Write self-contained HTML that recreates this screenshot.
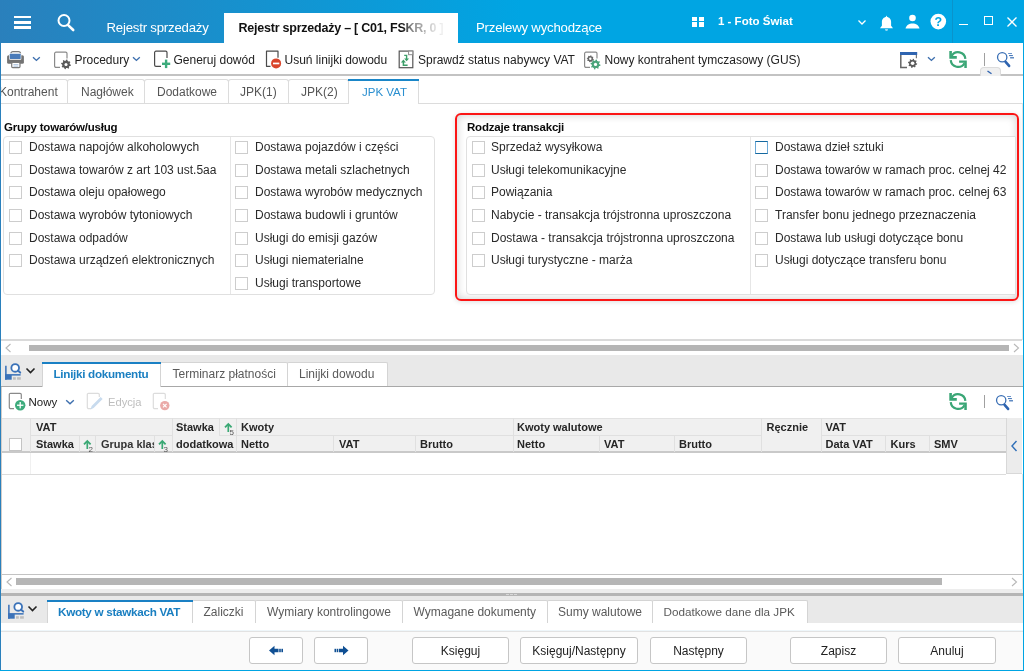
<!DOCTYPE html>
<html><head><meta charset="utf-8">
<style>
*{box-sizing:border-box;margin:0;padding:0}
html,body{width:1024px;height:671px;overflow:hidden;background:#fff}
body{position:relative;font-family:"Liberation Sans",sans-serif;font-size:12px;color:#222}
.a{position:absolute}
.t{position:absolute;white-space:nowrap;line-height:14px}
.cb{position:absolute;width:13px;height:13px;border:1px solid #cdcdcd;background:#fff}
</style></head><body>
<div id="root" style="position:absolute;left:0;top:0;width:1024px;height:671px;will-change:transform">

<div class="a" style="left:0px;top:0px;width:1024px;height:43px;background:linear-gradient(to right,#2a80bc 0px,#00a5e3 522px,#00a5e3 1024px)"></div>
<div class="a" style="left:14px;top:16.2px;width:17px;height:2.3px;background:#fff"></div>
<div class="a" style="left:14px;top:21.4px;width:17px;height:2.3px;background:#fff"></div>
<div class="a" style="left:14px;top:26.4px;width:17px;height:2.3px;background:#fff"></div>
<svg class="a" style="left:55px;top:12px;" width="22" height="22" viewBox="0 0 22 22"><circle cx="9" cy="8.5" r="5.5" fill="none" stroke="#fff" stroke-width="2"/><line x1="13.1" y1="13.1" x2="18.2" y2="18" stroke="#fff" stroke-width="2.6" stroke-linecap="round"/></svg>
<div class="t" style="left:106.5px;top:21px;font-size:13.2px;color:#fff;letter-spacing:-0.2px">Rejestr sprzedaży</div>
<div class="a" style="left:224px;top:13px;width:234px;height:30px;background:#fff"></div>
<div class="t" style="left:238.5px;top:21px;font-size:12.5px;letter-spacing:-0.23px;font-weight:bold;color:#111;width:214px;overflow:hidden;-webkit-mask-image:linear-gradient(to right,#000 163px,rgba(0,0,0,.5) 173px,rgba(0,0,0,.36) 183px,rgba(0,0,0,.12) 197px,rgba(0,0,0,.05) 205px)">Rejestr sprzedaży – [ C01, FSKR, 0 ]</div>
<div class="t" style="left:476px;top:21px;font-size:13.2px;color:#fff;letter-spacing:-0.2px">Przelewy wychodzące</div>
<div class="a" style="left:692px;top:16.5px;width:5px;height:4.5px;background:#fff"></div>
<div class="a" style="left:698.5px;top:16.5px;width:5px;height:4.5px;background:#fff"></div>
<div class="a" style="left:692px;top:22px;width:5px;height:4.5px;background:#fff"></div>
<div class="a" style="left:698.5px;top:22px;width:5px;height:4.5px;background:#fff"></div>
<div class="t" style="left:718px;top:14px;font-size:11.5px;font-weight:bold;color:#fff;">1 - Foto Świat</div>
<svg class="a" style="left:856px;top:17px;" width="12" height="10" viewBox="0 0 12 10"><polyline points="2.5,3.5 6,7 9.5,3.5" fill="none" stroke="#fff" stroke-width="1.3"/></svg>
<svg class="a" style="left:878px;top:14px;" width="17" height="18" viewBox="0 0 17 18"><path d="M8.5 3c-2.8 0-4.6 2.2-4.6 5v3.8L2 14.2h13l-1.9-2.4V8c0-2.8-1.8-5-4.6-5z" fill="#fff"/><path d="M7.5 3.6 L8.5 1.6 L9.5 3.6z" fill="#fff"/><path d="M7 15.2a1.5 1.5 0 0 0 3 0z" fill="#cfeefa"/></svg>
<svg class="a" style="left:903px;top:13px;" width="19" height="18" viewBox="0 0 19 18"><circle cx="9.5" cy="5" r="3.3" fill="#fff"/><path d="M2.5 15.6c0.6-3.4 3.6-5.2 7-5.2s6.4 1.8 7 5.2z" fill="#fff"/></svg>
<svg class="a" style="left:929px;top:13px;" width="19" height="18" viewBox="0 0 19 18"><circle cx="9.3" cy="8.6" r="7.8" fill="#fff"/><text x="9.3" y="13" text-anchor="middle" font-family="Liberation Sans" font-weight="bold" font-size="12.5" fill="#00a5e3">?</text></svg>
<div class="a" style="left:951.5px;top:0px;width:1px;height:43px;background:#0a93cb"></div>
<div class="a" style="left:959px;top:23.5px;width:9px;height:1.3px;background:#fff"></div>
<div class="a" style="left:984px;top:16px;width:9px;height:9px;border:1.3px solid #fff"></div>
<svg class="a" style="left:1006px;top:16px;" width="12" height="12" viewBox="0 0 12 12"><line x1="1.5" y1="1.5" x2="10.5" y2="10.5" stroke="#fff" stroke-width="1.3"/><line x1="10.5" y1="1.5" x2="1.5" y2="10.5" stroke="#fff" stroke-width="1.3"/></svg>
<div class="a" style="left:0px;top:74px;width:1023px;height:2px;background:#c3c3c3"></div>
<svg class="a" style="left:6px;top:50px;" width="20" height="19" viewBox="0 0 20 19"><path d="M4.9 5 V3.6 a2 2 0 0 1 2 -2 h5.6 a2 2 0 0 1 2 2 V5" fill="none" stroke="#7a7a7a" stroke-width="1.2"/><rect x="1.1" y="5.2" width="16.8" height="8.6" rx="1.5" fill="#737373"/><rect x="3.2" y="3.2" width="12.1" height="6.5" rx="0.8" fill="#fff"/><rect x="3.8" y="3.8" width="10.9" height="5.3" rx="0.5" fill="#4a7bb9"/><rect x="5.7" y="12.4" width="8.3" height="5.2" rx="1" fill="#fff" stroke="#7a7a7a" stroke-width="1.2"/><rect x="7.4" y="14.2" width="5" height="0.9" fill="#a8c0de"/><rect x="7.4" y="15.7" width="5" height="0.9" fill="#a8c0de"/></svg>
<svg class="a" style="left:32px;top:56.3px;" width="8.8" height="6.4" viewBox="0 0 8.8 6.4"><polyline points="1,1.2 4.4,4.4 7.8,1.2" fill="none" stroke="#3d6fae" stroke-width="1.4"/></svg>
<svg class="a" style="left:53px;top:50.5px;" width="20" height="19" viewBox="0 0 20 19"><path d="M7 16.4 H3 a1.4 1.4 0 0 1 -1.4 -1.4 V2.6 a1.4 1.4 0 0 1 1.4 -1.4 h9.6 a1.4 1.4 0 0 1 1.4 1.4 V7.5" fill="none" stroke="#8a8a8a" stroke-width="1.2"/><polygon points="16.62,13.26 17.89,13.75 17.65,14.95 16.29,14.92 15.66,15.86 16.21,17.10 15.19,17.78 14.26,16.80 13.14,17.02 12.65,18.29 11.45,18.05 11.48,16.69 10.54,16.06 9.30,16.61 8.62,15.59 9.60,14.66 9.38,13.54 8.11,13.05 8.35,11.85 9.71,11.88 10.34,10.94 9.79,9.70 10.81,9.02 11.74,10.00 12.86,9.78 13.35,8.51 14.55,8.75 14.52,10.11 15.46,10.74 16.70,10.19 17.38,11.21 16.40,12.14" fill="#5a5a5a"/><circle cx="13" cy="13.4" r="3.62" fill="#5a5a5a"/><circle cx="13" cy="13.4" r="1.5" fill="#fff"/></svg>
<div class="t" style="left:74.5px;top:53px;font-size:12px;color:#222;">Procedury</div>
<svg class="a" style="left:132px;top:56px;" width="8.8" height="6.4" viewBox="0 0 8.8 6.4"><polyline points="1,1.2 4.4,4.4 7.8,1.2" fill="none" stroke="#3d6fae" stroke-width="1.4"/></svg>
<svg class="a" style="left:153px;top:50px;" width="20" height="19" viewBox="0 0 20 19"><path d="M8 16.3 H3 a1.4 1.4 0 0 1 -1.4 -1.4 V2.6 a1.4 1.4 0 0 1 1.4 -1.4 h9.6 a1.4 1.4 0 0 1 1.4 1.4 V8" fill="none" stroke="#4a4a4a" stroke-width="1.2"/><rect x="9" y="12.6" width="8.2" height="2.4" fill="#3dab7c"/><rect x="11.9" y="9.6" width="2.4" height="8.5" fill="#3dab7c"/></svg>
<div class="t" style="left:173.5px;top:53px;font-size:12px;color:#222;">Generuj dowód</div>
<svg class="a" style="left:264px;top:50px;" width="20" height="19" viewBox="0 0 20 19"><path d="M6.5 16.3 H2.5 V1.2 h11.5 V7.8" fill="none" stroke="#4a4a4a" stroke-width="1.2" stroke-linejoin="round"/><circle cx="12.1" cy="13.4" r="5" fill="#d9452b"/><rect x="9" y="12.6" width="6.3" height="1.7" fill="#fff"/></svg>
<div class="t" style="left:284.5px;top:53px;font-size:12px;color:#222;">Usuń linijki dowodu</div>
<svg class="a" style="left:398px;top:50px;" width="16" height="19" viewBox="0 0 16 19"><rect x="1.2" y="1.1" width="13.6" height="16.6" fill="#fff" stroke="#555" stroke-width="1.2"/><rect x="10.6" y="1.1" width="4.2" height="3.6" fill="#fff" stroke="#8a8a8a" stroke-width="1"/><path d="M6.2 5.4 H8.6 V9.2" fill="none" stroke="#3b9e68" stroke-width="1.4"/><path d="M6.1 8.6 H11.1 L8.6 11.2 Z" fill="#3b9e68"/><path d="M5.4 11.8 V15.3 H9.6" fill="none" stroke="#3b9e68" stroke-width="1.5"/><path d="M2.9 12.4 H7.9 L5.4 9.4 Z" fill="#3b9e68"/></svg>
<div class="t" style="left:418px;top:53px;font-size:12px;color:#222;">Sprawdź status nabywcy VAT</div>
<svg class="a" style="left:583px;top:50.5px;" width="20" height="19" viewBox="0 0 20 19"><path d="M7 16.4 H3 a1.4 1.4 0 0 1 -1.4 -1.4 V2.6 a1.4 1.4 0 0 1 1.4 -1.4 h9.6 a1.4 1.4 0 0 1 1.4 1.4 V7.5" fill="none" stroke="#8a8a8a" stroke-width="1.2"/><polygon points="9.89,7.70 10.79,8.05 10.62,8.91 9.65,8.88 9.20,9.56 9.59,10.44 8.86,10.93 8.20,10.23 7.40,10.39 7.05,11.29 6.19,11.12 6.22,10.15 5.54,9.70 4.66,10.09 4.17,9.36 4.87,8.70 4.71,7.90 3.81,7.55 3.98,6.69 4.95,6.72 5.40,6.04 5.01,5.16 5.74,4.67 6.40,5.37 7.20,5.21 7.55,4.31 8.41,4.48 8.38,5.45 9.06,5.90 9.94,5.51 10.43,6.24 9.73,6.90" fill="#666"/><circle cx="7.3" cy="7.8" r="2.59" fill="#666"/><circle cx="7.3" cy="7.8" r="1.2" fill="#fff"/><polygon points="16.20,13.25 17.49,13.75 17.24,14.98 15.86,14.95 15.22,15.91 15.78,17.18 14.73,17.87 13.78,16.87 12.65,17.10 12.15,18.39 10.92,18.14 10.95,16.76 9.99,16.12 8.72,16.68 8.03,15.63 9.03,14.68 8.80,13.55 7.51,13.05 7.76,11.82 9.14,11.85 9.78,10.89 9.22,9.62 10.27,8.93 11.22,9.93 12.35,9.70 12.85,8.41 14.08,8.66 14.05,10.04 15.01,10.68 16.28,10.12 16.97,11.17 15.97,12.12" fill="#4aa47a"/><circle cx="12.5" cy="13.4" r="3.70" fill="#4aa47a"/><circle cx="12.5" cy="13.4" r="1.6" fill="#fff"/></svg>
<div class="t" style="left:604.5px;top:53px;font-size:12px;color:#222;">Nowy kontrahent tymczasowy (GUS)</div>
<svg class="a" style="left:899px;top:51px;" width="20" height="18" viewBox="0 0 20 18"><rect x="1" y="1" width="17.2" height="3" fill="#2f64b0"/><path d="M1.8 4 V16.4 H8" fill="none" stroke="#666" stroke-width="1.5"/><path d="M17.4 4 V7.2" stroke="#777" stroke-width="1.2"/><polygon points="17.00,12.17 18.19,12.62 17.96,13.76 16.69,13.73 16.10,14.61 16.61,15.77 15.66,16.41 14.78,15.49 13.73,15.70 13.28,16.89 12.14,16.66 12.17,15.39 11.29,14.80 10.13,15.31 9.49,14.36 10.41,13.48 10.20,12.43 9.01,11.98 9.24,10.84 10.51,10.87 11.10,9.99 10.59,8.83 11.54,8.19 12.42,9.11 13.47,8.90 13.92,7.71 15.06,7.94 15.03,9.21 15.91,9.80 17.07,9.29 17.71,10.24 16.79,11.12" fill="#5c5c5c"/><circle cx="13.6" cy="12.3" r="3.40" fill="#5c5c5c"/><circle cx="13.6" cy="12.3" r="1.8" fill="#fff"/></svg>
<svg class="a" style="left:927px;top:56px;" width="8.8" height="6.4" viewBox="0 0 8.8 6.4"><polyline points="1,1.2 4.4,4.4 7.8,1.2" fill="none" stroke="#3d6fae" stroke-width="1.4"/></svg>
<svg class="a" style="left:945px;top:48px;" width="26" height="22" viewBox="0 0 26 22"><path d="M6.68 7.87 A7.35 7.35 0 0 1 20.37 10.91" fill="none" stroke="#3aa676" stroke-width="2.2"/><path d="M4.3 3.1 H6.9 V8 H11.8 V10.7 H4.3 Z" fill="#3aa676"/><path d="M5.73 12.19 A7.35 7.35 0 0 0 19.42 15.23" fill="none" stroke="#3aa676" stroke-width="2.2"/><path d="M14.1 12.5 H21.8 V20 H19.3 V14.75 H14.1 Z" fill="#3aa676"/></svg>
<div class="a" style="left:984px;top:53px;width:1px;height:13px;background:#a0a0a0"></div>
<svg class="a" style="left:994px;top:49px;" width="22" height="20" viewBox="0 0 22 20"><circle cx="8.2" cy="8.3" r="4.65" fill="none" stroke="#3a6fb5" stroke-width="1.3"/><line x1="11.6" y1="12.8" x2="15.1" y2="16.9" stroke="#2f64b0" stroke-width="2.6" stroke-linecap="round"/><rect x="14.1" y="4.1" width="3.9" height="0.9" fill="#5b88c4"/><rect x="15" y="6.1" width="3.9" height="1" fill="#3a6fb5"/><rect x="16.1" y="8.2" width="3.9" height="1.2" fill="#3a6fb5"/></svg>
<div class="a" style="left:980px;top:67px;width:21px;height:9px;background:#f0f0f0;border:1px solid #dcdcdc;border-bottom:none;border-radius:4px 4px 0 0"></div>
<svg class="a" style="left:986px;top:70px;" width="8" height="5" viewBox="0 0 8 5"><line x1="1.5" y1="1" x2="5.5" y2="3.8" stroke="#2f64b0" stroke-width="1.4"/></svg>
<div class="a" style="left:0px;top:103px;width:1022px;height:1px;background:#dcdcdc"></div>
<div class="a" style="left:-5px;top:79px;width:73px;height:24px;background:#fff;border:1px solid #dcdcdc;border-bottom:none;border-radius:3px 3px 0 0;"></div>
<div class="a" style="left:67px;top:79px;width:78px;height:24px;background:#fff;border:1px solid #dcdcdc;border-bottom:none;border-radius:3px 3px 0 0;"></div>
<div class="a" style="left:144px;top:79px;width:85px;height:24px;background:#fff;border:1px solid #dcdcdc;border-bottom:none;border-radius:3px 3px 0 0;"></div>
<div class="a" style="left:228px;top:79px;width:61px;height:24px;background:#fff;border:1px solid #dcdcdc;border-bottom:none;border-radius:3px 3px 0 0;"></div>
<div class="a" style="left:288px;top:79px;width:61px;height:24px;background:#fff;border:1px solid #dcdcdc;border-bottom:none;border-radius:3px 3px 0 0;"></div>
<div class="a" style="left:348px;top:79px;width:71px;height:25px;background:#fff;border:1px solid #dcdcdc;border-bottom:none;border-radius:3px 3px 0 0;"></div>
<div class="a" style="left:348px;top:79px;width:71px;height:2px;background:#1a86c8"></div>
<div class="t" style="left:-1px;top:85px;font-size:12px;color:#555;">Kontrahent</div>
<div class="t" style="left:81px;top:85px;font-size:12px;color:#555;">Nagłówek</div>
<div class="t" style="left:157px;top:85px;font-size:12px;color:#555;">Dodatkowe</div>
<div class="t" style="left:240px;top:85px;font-size:12px;color:#555;">JPK(1)</div>
<div class="t" style="left:301px;top:85px;font-size:12px;color:#555;">JPK(2)</div>
<div class="t" style="left:362px;top:85px;font-size:11.5px;color:#2a8fd0;">JPK VAT</div>
<div class="t" style="left:4px;top:120px;font-size:11.5px;font-weight:bold;color:#0a0a0a;letter-spacing:-0.22px">Grupy towarów/usług</div>
<div class="a" style="left:3px;top:136px;width:432px;height:159px;border:1px solid #e0e0e0;border-radius:4px"></div>
<div class="a" style="left:230px;top:137px;width:1px;height:157px;background:#e6e6e6"></div>
<div class="cb" style="left:9px;top:141px;border-color:#cdcdcd"></div>
<div class="t" style="left:29px;top:140px;font-size:12px;color:#2a2a2a;">Dostawa napojów alkoholowych</div>
<div class="cb" style="left:9px;top:164px;border-color:#cdcdcd"></div>
<div class="t" style="left:29px;top:163px;font-size:12px;color:#2a2a2a;">Dostawa towarów z art 103 ust.5aa</div>
<div class="cb" style="left:9px;top:186px;border-color:#cdcdcd"></div>
<div class="t" style="left:29px;top:185px;font-size:12px;color:#2a2a2a;">Dostawa oleju opałowego</div>
<div class="cb" style="left:9px;top:209px;border-color:#cdcdcd"></div>
<div class="t" style="left:29px;top:208px;font-size:12px;color:#2a2a2a;">Dostawa wyrobów tytoniowych</div>
<div class="cb" style="left:9px;top:232px;border-color:#cdcdcd"></div>
<div class="t" style="left:29px;top:231px;font-size:12px;color:#2a2a2a;">Dostawa odpadów</div>
<div class="cb" style="left:9px;top:254px;border-color:#cdcdcd"></div>
<div class="t" style="left:29px;top:253px;font-size:12px;color:#2a2a2a;">Dostawa urządzeń elektronicznych</div>
<div class="cb" style="left:235px;top:141px;border-color:#cdcdcd"></div>
<div class="t" style="left:255px;top:140px;font-size:12px;color:#2a2a2a;">Dostawa pojazdów i części</div>
<div class="cb" style="left:235px;top:164px;border-color:#cdcdcd"></div>
<div class="t" style="left:255px;top:163px;font-size:12px;color:#2a2a2a;">Dostawa metali szlachetnych</div>
<div class="cb" style="left:235px;top:186px;border-color:#cdcdcd"></div>
<div class="t" style="left:255px;top:185px;font-size:12px;color:#2a2a2a;">Dostawa wyrobów medycznych</div>
<div class="cb" style="left:235px;top:209px;border-color:#cdcdcd"></div>
<div class="t" style="left:255px;top:208px;font-size:12px;color:#2a2a2a;">Dostawa budowli i gruntów</div>
<div class="cb" style="left:235px;top:232px;border-color:#cdcdcd"></div>
<div class="t" style="left:255px;top:231px;font-size:12px;color:#2a2a2a;">Usługi do emisji gazów</div>
<div class="cb" style="left:235px;top:254px;border-color:#cdcdcd"></div>
<div class="t" style="left:255px;top:253px;font-size:12px;color:#2a2a2a;">Usługi niematerialne</div>
<div class="cb" style="left:235px;top:277px;border-color:#cdcdcd"></div>
<div class="t" style="left:255px;top:276px;font-size:12px;color:#2a2a2a;">Usługi transportowe</div>
<div class="a" style="left:455px;top:113px;width:564px;height:188px;border:2px solid #fb1515;border-radius:6px;box-shadow:0 1px 5px rgba(0,0,0,.13), inset 0 0 8px rgba(0,0,0,.2)"></div>
<div class="t" style="left:467px;top:120px;font-size:11.5px;font-weight:bold;color:#0a0a0a;letter-spacing:-0.22px">Rodzaje transakcji</div>
<div class="a" style="left:466px;top:136px;width:550px;height:159px;border:1px solid #e0e0e0;border-radius:4px 0 0 4px;background:#fff"></div>
<div class="a" style="left:750px;top:137px;width:1px;height:157px;background:#e6e6e6"></div>
<div class="cb" style="left:472px;top:141px;border-color:#cdcdcd"></div>
<div class="t" style="left:491px;top:140px;font-size:12px;color:#2a2a2a;">Sprzedaż wysyłkowa</div>
<div class="cb" style="left:472px;top:164px;border-color:#cdcdcd"></div>
<div class="t" style="left:491px;top:163px;font-size:12px;color:#2a2a2a;">Usługi telekomunikacyjne</div>
<div class="cb" style="left:472px;top:186px;border-color:#cdcdcd"></div>
<div class="t" style="left:491px;top:185px;font-size:12px;color:#2a2a2a;">Powiązania</div>
<div class="cb" style="left:472px;top:209px;border-color:#cdcdcd"></div>
<div class="t" style="left:491px;top:208px;font-size:12px;color:#2a2a2a;">Nabycie - transakcja trójstronna uproszczona</div>
<div class="cb" style="left:472px;top:232px;border-color:#cdcdcd"></div>
<div class="t" style="left:491px;top:231px;font-size:12px;color:#2a2a2a;">Dostawa - transakcja trójstronna uproszczona</div>
<div class="cb" style="left:472px;top:254px;border-color:#cdcdcd"></div>
<div class="t" style="left:491px;top:253px;font-size:12px;color:#2a2a2a;">Usługi turystyczne - marża</div>
<div class="cb" style="left:755px;top:141px;border-color:#15689f #6aa8d6"></div>
<div class="t" style="left:775px;top:140px;font-size:12px;color:#2a2a2a;">Dostawa dzieł sztuki</div>
<div class="cb" style="left:755px;top:164px;border-color:#cdcdcd"></div>
<div class="t" style="left:775px;top:163px;font-size:12px;color:#2a2a2a;">Dostawa towarów w ramach proc. celnej 42</div>
<div class="cb" style="left:755px;top:186px;border-color:#cdcdcd"></div>
<div class="t" style="left:775px;top:185px;font-size:12px;color:#2a2a2a;">Dostawa towarów w ramach proc. celnej 63</div>
<div class="cb" style="left:755px;top:209px;border-color:#cdcdcd"></div>
<div class="t" style="left:775px;top:208px;font-size:12px;color:#2a2a2a;">Transfer bonu jednego przeznaczenia</div>
<div class="cb" style="left:755px;top:232px;border-color:#cdcdcd"></div>
<div class="t" style="left:775px;top:231px;font-size:12px;color:#2a2a2a;">Dostawa lub usługi dotyczące bonu</div>
<div class="cb" style="left:755px;top:254px;border-color:#cdcdcd"></div>
<div class="t" style="left:775px;top:253px;font-size:12px;color:#2a2a2a;">Usługi dotyczące transferu bonu</div>
<div class="a" style="left:1022px;top:103px;width:1px;height:237px;background:#e4e4e4"></div>
<div class="a" style="left:1px;top:339px;width:1021px;height:2px;background:#dadada"></div>
<svg class="a" style="left:4px;top:343px;" width="9" height="10" viewBox="0 0 9 10"><polyline points="6.5,1 2,5 6.5,9" fill="none" stroke="#b8b8b8" stroke-width="1.1"/></svg>
<div class="a" style="left:29px;top:345px;width:980px;height:6px;background:#b5b5b5"></div>
<svg class="a" style="left:1012px;top:343px;" width="9" height="10" viewBox="0 0 9 10"><polyline points="2,1 6.5,5 2,9" fill="none" stroke="#b8b8b8" stroke-width="1.1"/></svg>
<div class="a" style="left:1px;top:355px;width:1022px;height:31px;background:#e9e9e9"></div>
<div class="a" style="left:1px;top:386px;width:1022px;height:1px;background:#a8a8a8"></div>
<svg class="a" style="left:4px;top:362px;" width="18" height="19" viewBox="0 0 18 19"><rect x="1.1" y="3.75" width="1.55" height="14" fill="#3b72b8"/><rect x="1.1" y="12.1" width="15.5" height="1.5" fill="#3b72b8"/><rect x="1.1" y="13" width="6.6" height="4.7" fill="#3b72b8"/><rect x="9" y="15.2" width="2.8" height="2.5" fill="#bdbdbd"/><rect x="13.1" y="15.2" width="3.7" height="2.5" fill="#bdbdbd"/><circle cx="11.2" cy="5.9" r="3.85" fill="#fff" stroke="#3b72b8" stroke-width="1.8"/><line x1="13.9" y1="8.6" x2="16.2" y2="10.6" stroke="#3b72b8" stroke-width="2" stroke-linecap="round"/></svg>
<svg class="a" style="left:25px;top:367px;" width="12" height="8" viewBox="0 0 12 8"><polyline points="1.5,1.5 5.5,5.5 9.5,1.5" fill="none" stroke="#222" stroke-width="1.6"/></svg>
<div class="a" style="left:160px;top:362px;width:128px;height:24px;background:#fff;border:1px solid #d4d4d4;border-bottom:none;border-radius:2px 2px 0 0"></div>
<div class="a" style="left:287px;top:362px;width:101px;height:24px;background:#fff;border:1px solid #d4d4d4;border-bottom:none;border-radius:2px 2px 0 0"></div>
<div class="a" style="left:42px;top:362px;width:119px;height:25px;background:#fff;border:1px solid #d4d4d4;border-bottom:none;border-radius:2px 2px 0 0"></div>
<div class="a" style="left:42px;top:362px;width:119px;height:2px;background:#1a80c4"></div>
<div class="t" style="left:53.5px;top:367px;font-size:11.7px;font-weight:bold;color:#1a7fc1;letter-spacing:-0.3px">Linijki dokumentu</div>
<div class="t" style="left:172.5px;top:367px;font-size:12px;color:#5a5a5a;">Terminarz płatności</div>
<div class="t" style="left:299px;top:367px;font-size:12px;color:#5a5a5a;">Linijki dowodu</div>
<svg class="a" style="left:8px;top:392px;" width="20" height="19" viewBox="0 0 20 19"><path d="M6 16.6 H2.6 a1.3 1.3 0 0 1 -1.3 -1.3 V2.6 a1.3 1.3 0 0 1 1.3 -1.3 h9.4 a1.3 1.3 0 0 1 1.3 1.3 V7" fill="none" stroke="#8a8a8a" stroke-width="1.2"/><circle cx="12.2" cy="13.2" r="5.2" fill="#3dab7c"/><rect x="9" y="12.6" width="6.4" height="1.3" fill="#fff"/><rect x="11.55" y="10" width="1.3" height="6.4" fill="#fff"/></svg>
<div class="t" style="left:28.5px;top:395px;font-size:11.5px;color:#222;">Nowy</div>
<svg class="a" style="left:65px;top:399px;" width="10" height="7" viewBox="0 0 10 7"><polyline points="1.2,1.2 5,4.8 8.8,1.2" fill="none" stroke="#3d6fae" stroke-width="1.4"/></svg>
<svg class="a" style="left:86px;top:392px;" width="18" height="19" viewBox="0 0 18 19"><path d="M5 16.6 H2.6 a1.3 1.3 0 0 1 -1.3 -1.3 V2.6 a1.3 1.3 0 0 1 1.3 -1.3 h9.4 a1.3 1.3 0 0 1 1.3 1.3 V5" fill="none" stroke="#dcdcdc" stroke-width="1.2"/><path d="M4.6 17.4 L5.6 14 L14.6 5 L16.6 7 L7.6 16 Z" fill="#c8dbee"/></svg>
<div class="t" style="left:108px;top:395px;font-size:11.2px;color:#bdbdbd;">Edycja</div>
<svg class="a" style="left:152px;top:392px;" width="20" height="19" viewBox="0 0 20 19"><path d="M6 16.6 H2.6 a1.3 1.3 0 0 1 -1.3 -1.3 V2.6 a1.3 1.3 0 0 1 1.3 -1.3 h9.4 a1.3 1.3 0 0 1 1.3 1.3 V7" fill="none" stroke="#dcdcdc" stroke-width="1.2"/><circle cx="12.8" cy="13.6" r="4.7" fill="#eaaaa8"/><path d="M11 11.8 L14.6 15.4 M14.6 11.8 L11 15.4" stroke="#fff" stroke-width="1.2"/></svg>
<svg class="a" style="left:944.5px;top:390px;" width="26" height="22" viewBox="0 0 26 22"><path d="M6.68 7.87 A7.35 7.35 0 0 1 20.37 10.91" fill="none" stroke="#3aa676" stroke-width="2.2"/><path d="M4.3 3.1 H6.9 V8 H11.8 V10.7 H4.3 Z" fill="#3aa676"/><path d="M5.73 12.19 A7.35 7.35 0 0 0 19.42 15.23" fill="none" stroke="#3aa676" stroke-width="2.2"/><path d="M14.1 12.5 H21.8 V20 H19.3 V14.75 H14.1 Z" fill="#3aa676"/></svg>
<div class="a" style="left:983.5px;top:395px;width:1px;height:13px;background:#a0a0a0"></div>
<svg class="a" style="left:993px;top:391.5px;" width="22" height="20" viewBox="0 0 22 20"><circle cx="8.2" cy="8.3" r="4.65" fill="none" stroke="#3a6fb5" stroke-width="1.3"/><line x1="11.6" y1="12.8" x2="15.1" y2="16.9" stroke="#2f64b0" stroke-width="2.6" stroke-linecap="round"/><rect x="14.1" y="4.1" width="3.9" height="0.9" fill="#5b88c4"/><rect x="15" y="6.1" width="3.9" height="1" fill="#3a6fb5"/><rect x="16.1" y="8.2" width="3.9" height="1.2" fill="#3a6fb5"/></svg>
<div class="a" style="left:1px;top:418px;width:1005px;height:34px;background:#f0f0f0;border-top:1px solid #e2e2e2"></div>
<div class="a" style="left:1px;top:451px;width:1005px;height:2px;background:#c9c9c9"></div>
<div class="a" style="left:1006px;top:418px;width:16px;height:56px;background:#ececec;border-left:1px solid #d8d8d8;border-bottom:1px solid #d8d8d8"></div>
<svg class="a" style="left:1010px;top:440px;" width="9" height="12" viewBox="0 0 9 12"><polyline points="6.5,1 2,6 6.5,11" fill="none" stroke="#2f6fb8" stroke-width="1.4"/></svg>
<div class="a" style="left:30px;top:418px;width:1px;height:34px;background:#e0e0e0"></div>
<div class="a" style="left:172px;top:418px;width:1px;height:34px;background:#e0e0e0"></div>
<div class="a" style="left:236px;top:418px;width:1px;height:34px;background:#e0e0e0"></div>
<div class="a" style="left:513px;top:418px;width:1px;height:34px;background:#e0e0e0"></div>
<div class="a" style="left:761px;top:418px;width:1px;height:34px;background:#e0e0e0"></div>
<div class="a" style="left:821px;top:418px;width:1px;height:34px;background:#e0e0e0"></div>
<div class="a" style="left:30px;top:435px;width:142px;height:1px;background:#e0e0e0"></div>
<div class="a" style="left:236px;top:435px;width:277px;height:1px;background:#e0e0e0"></div>
<div class="a" style="left:513px;top:435px;width:248px;height:1px;background:#e0e0e0"></div>
<div class="a" style="left:821px;top:435px;width:185px;height:1px;background:#e0e0e0"></div>
<div class="a" style="left:219px;top:418px;width:1px;height:17px;background:#e0e0e0"></div>
<div class="a" style="left:219px;top:435px;width:17px;height:1px;background:#e0e0e0"></div>
<div class="a" style="left:79px;top:435px;width:1px;height:17px;background:#e0e0e0"></div>
<div class="a" style="left:95px;top:435px;width:1px;height:17px;background:#e0e0e0"></div>
<div class="a" style="left:154px;top:435px;width:1px;height:17px;background:#e0e0e0"></div>
<div class="a" style="left:333px;top:435px;width:1px;height:17px;background:#e0e0e0"></div>
<div class="a" style="left:415px;top:435px;width:1px;height:17px;background:#e0e0e0"></div>
<div class="a" style="left:599px;top:435px;width:1px;height:17px;background:#e0e0e0"></div>
<div class="a" style="left:674px;top:435px;width:1px;height:17px;background:#e0e0e0"></div>
<div class="a" style="left:885px;top:435px;width:1px;height:17px;background:#e0e0e0"></div>
<div class="a" style="left:929px;top:435px;width:1px;height:17px;background:#e0e0e0"></div>
<div class="cb" style="left:9px;top:438px;border-color:#c4c4c4"></div>
<div class="t" style="left:36px;top:420px;font-size:11px;font-weight:bold;color:#262626;">VAT</div>
<div class="t" style="left:176px;top:420px;font-size:11px;font-weight:bold;color:#262626;">Stawka</div>
<div class="t" style="left:241px;top:420px;font-size:11px;font-weight:bold;color:#262626;">Kwoty</div>
<div class="t" style="left:517px;top:420px;font-size:11px;font-weight:bold;color:#262626;">Kwoty walutowe</div>
<div class="t" style="left:766.5px;top:420px;font-size:11px;font-weight:bold;color:#262626;">Ręcznie</div>
<div class="t" style="left:825.5px;top:420px;font-size:11px;font-weight:bold;color:#262626;">VAT</div>
<div class="t" style="left:36px;top:437px;font-size:11px;font-weight:bold;color:#262626;">Stawka</div>
<div class="t" style="left:176px;top:437px;font-size:11px;font-weight:bold;color:#262626;">dodatkowa</div>
<div class="t" style="left:241px;top:437px;font-size:11px;font-weight:bold;color:#262626;">Netto</div>
<div class="t" style="left:339px;top:437px;font-size:11px;font-weight:bold;color:#262626;">VAT</div>
<div class="t" style="left:420px;top:437px;font-size:11px;font-weight:bold;color:#262626;">Brutto</div>
<div class="t" style="left:517px;top:437px;font-size:11px;font-weight:bold;color:#262626;">Netto</div>
<div class="t" style="left:604px;top:437px;font-size:11px;font-weight:bold;color:#262626;">VAT</div>
<div class="t" style="left:679px;top:437px;font-size:11px;font-weight:bold;color:#262626;">Brutto</div>
<div class="t" style="left:825.5px;top:437px;font-size:11px;font-weight:bold;color:#262626;">Data VAT</div>
<div class="t" style="left:890.5px;top:437px;font-size:11px;font-weight:bold;color:#262626;">Kurs</div>
<div class="t" style="left:934px;top:437px;font-size:11px;font-weight:bold;color:#262626;">SMV</div>
<div class="t" style="left:101px;top:437px;width:53px;overflow:hidden;font-size:11px;font-weight:bold;color:#333">Grupa klasyfikacji</div>
<svg class="a" style="left:83px;top:439px;" width="14" height="14" viewBox="0 0 14 14"><line x1="4.3" y1="2" x2="4.3" y2="10" stroke="#3aa874" stroke-width="1.7"/><polyline points="1,5.3 4.3,2 7.6,5.3" fill="none" stroke="#3aa874" stroke-width="1.8"/><text x="5.6" y="13.4" font-family="Liberation Sans" font-size="8" fill="#555">2</text></svg>
<svg class="a" style="left:158px;top:439px;" width="14" height="14" viewBox="0 0 14 14"><line x1="4.3" y1="2" x2="4.3" y2="10" stroke="#3aa874" stroke-width="1.7"/><polyline points="1,5.3 4.3,2 7.6,5.3" fill="none" stroke="#3aa874" stroke-width="1.8"/><text x="5.6" y="13.4" font-family="Liberation Sans" font-size="8" fill="#555">3</text></svg>
<svg class="a" style="left:224px;top:422px;" width="14" height="14" viewBox="0 0 14 14"><line x1="4.3" y1="2" x2="4.3" y2="10" stroke="#3aa874" stroke-width="1.7"/><polyline points="1,5.3 4.3,2 7.6,5.3" fill="none" stroke="#3aa874" stroke-width="1.8"/><text x="5.6" y="13.4" font-family="Liberation Sans" font-size="8" fill="#555">5</text></svg>
<div class="a" style="left:30px;top:453px;width:1px;height:21px;background:#f0f0f0"></div>
<div class="a" style="left:1px;top:474px;width:1005px;height:1px;background:#dcdcdc"></div>
<div class="a" style="left:1px;top:574px;width:1021px;height:1px;background:#c3c3c3"></div>
<svg class="a" style="left:5px;top:577px;" width="9" height="10" viewBox="0 0 9 10"><polyline points="6.5,1 2,5 6.5,9" fill="none" stroke="#b8b8b8" stroke-width="1.1"/></svg>
<div class="a" style="left:16px;top:578px;width:926px;height:7px;background:#b6b6b6"></div>
<svg class="a" style="left:1010px;top:577px;" width="9" height="10" viewBox="0 0 9 10"><polyline points="2,1 6.5,5 2,9" fill="none" stroke="#b8b8b8" stroke-width="1.1"/></svg>
<div class="a" style="left:1022px;top:474px;width:1px;height:116px;background:#e4e4e4"></div>
<div class="a" style="left:1px;top:589px;width:1022px;height:4px;background:#ededed"></div>
<div class="a" style="left:1px;top:593px;width:1022px;height:3px;background:#b5b5b5"></div>
<div class="a" style="left:506px;top:594px;width:3px;height:1px;background:#d8d8d8"></div>
<div class="a" style="left:510px;top:594px;width:3px;height:1px;background:#d8d8d8"></div>
<div class="a" style="left:514px;top:594px;width:3px;height:1px;background:#d8d8d8"></div>
<div class="a" style="left:1px;top:596px;width:1022px;height:27px;background:#e9e9e9"></div>
<div class="a" style="left:1px;top:623px;width:1022px;height:8px;background:#fff"></div>
<div class="a" style="left:1px;top:630px;width:1022px;height:1px;background:#eef6fa"></div>
<div class="a" style="left:1px;top:631px;width:1022px;height:1px;background:#e2e2e2"></div>
<svg class="a" style="left:7px;top:601px;" width="18" height="19" viewBox="0 0 18 19"><rect x="1.1" y="3.75" width="1.55" height="14" fill="#3b72b8"/><rect x="1.1" y="12.1" width="15.5" height="1.5" fill="#3b72b8"/><rect x="1.1" y="13" width="6.6" height="4.7" fill="#3b72b8"/><rect x="9" y="15.2" width="2.8" height="2.5" fill="#bdbdbd"/><rect x="13.1" y="15.2" width="3.7" height="2.5" fill="#bdbdbd"/><circle cx="11.2" cy="5.9" r="3.85" fill="#fff" stroke="#3b72b8" stroke-width="1.8"/><line x1="13.9" y1="8.6" x2="16.2" y2="10.6" stroke="#3b72b8" stroke-width="2" stroke-linecap="round"/></svg>
<svg class="a" style="left:27px;top:605px;" width="12" height="8" viewBox="0 0 12 8"><polyline points="1.5,1.5 5.5,5.5 9.5,1.5" fill="none" stroke="#222" stroke-width="1.6"/></svg>
<div class="a" style="left:192px;top:600px;width:64px;height:23px;background:#fff;border:1px solid #d4d4d4;border-bottom:none;border-radius:2px 2px 0 0"></div>
<div class="t" style="left:203.5px;top:605px;font-size:12px;color:#5a5a5a;">Zaliczki</div>
<div class="a" style="left:255px;top:600px;width:148px;height:23px;background:#fff;border:1px solid #d4d4d4;border-bottom:none;border-radius:2px 2px 0 0"></div>
<div class="t" style="left:267px;top:605px;font-size:12px;color:#5a5a5a;">Wymiary kontrolingowe</div>
<div class="a" style="left:402px;top:600px;width:146px;height:23px;background:#fff;border:1px solid #d4d4d4;border-bottom:none;border-radius:2px 2px 0 0"></div>
<div class="t" style="left:413.5px;top:605px;font-size:12px;color:#5a5a5a;">Wymagane dokumenty</div>
<div class="a" style="left:547px;top:600px;width:106px;height:23px;background:#fff;border:1px solid #d4d4d4;border-bottom:none;border-radius:2px 2px 0 0"></div>
<div class="t" style="left:558px;top:605px;font-size:12px;color:#5a5a5a;">Sumy walutowe</div>
<div class="a" style="left:652px;top:600px;width:156px;height:23px;background:#fff;border:1px solid #d4d4d4;border-bottom:none;border-radius:2px 2px 0 0"></div>
<div class="t" style="left:663.5px;top:605px;font-size:11.7px;color:#5a5a5a;">Dodatkowe dane dla JPK</div>
<div class="a" style="left:1px;top:623px;width:1022px;height:0px;"></div>
<div class="a" style="left:47px;top:600px;width:146px;height:23px;background:#fff;border:1px solid #d4d4d4;border-bottom:none;border-radius:2px 2px 0 0"></div>
<div class="a" style="left:47px;top:600px;width:146px;height:2px;background:#1a80c4"></div>
<div class="t" style="left:58px;top:605px;font-size:11.7px;font-weight:bold;color:#1a7fc1;letter-spacing:-0.3px">Kwoty w stawkach VAT</div>
<div class="a" style="left:1px;top:632px;width:1022px;height:38px;background:#fafafa"></div>
<div class="a" style="left:249px;top:637px;width:54px;height:27px;background:#fff;border:1px solid #c6c6c6;border-radius:3px"></div>
<div class="a" style="left:314px;top:637px;width:54px;height:27px;background:#fff;border:1px solid #c6c6c6;border-radius:3px"></div>
<svg class="a" style="left:268px;top:645px;" width="18" height="12" viewBox="0 0 18 12"><path d="M1 5.5 L6.5 0.8 V3.8 H10.5 V7.2 H6.5 V10.2 Z" fill="#0f4f93"/><rect x="11.2" y="3.8" width="1.6" height="3.4" fill="#0f4f93"/><rect x="13.4" y="3.8" width="1.6" height="3.4" fill="#0f4f93"/></svg>
<svg class="a" style="left:331.5px;top:645px;" width="18" height="12" viewBox="0 0 18 12"><path d="M16.5 5.5 L11 0.8 V3.8 H7 V7.2 H11 V10.2 Z" fill="#0f4f93"/><rect x="4.7" y="3.8" width="1.6" height="3.4" fill="#0f4f93"/><rect x="2.5" y="3.8" width="1.6" height="3.4" fill="#0f4f93"/></svg>
<div class="a" style="left:412px;top:637px;width:97px;height:27px;background:#fff;border:1px solid #c6c6c6;border-radius:3px"></div>
<div class="t" style="left:412px;top:644px;width:97px;text-align:center;font-size:12px;color:#222">Księguj</div>
<div class="a" style="left:520px;top:637px;width:118px;height:27px;background:#fff;border:1px solid #c6c6c6;border-radius:3px"></div>
<div class="t" style="left:520px;top:644px;width:118px;text-align:center;font-size:12px;color:#222">Księguj/Następny</div>
<div class="a" style="left:650px;top:637px;width:97px;height:27px;background:#fff;border:1px solid #c6c6c6;border-radius:3px"></div>
<div class="t" style="left:650px;top:644px;width:97px;text-align:center;font-size:12px;color:#222">Następny</div>
<div class="a" style="left:790px;top:637px;width:97px;height:27px;background:#fff;border:1px solid #c6c6c6;border-radius:3px"></div>
<div class="t" style="left:790px;top:644px;width:97px;text-align:center;font-size:12px;color:#222">Zapisz</div>
<div class="a" style="left:898px;top:637px;width:98px;height:27px;background:#fff;border:1px solid #c6c6c6;border-radius:3px"></div>
<div class="t" style="left:898px;top:644px;width:98px;text-align:center;font-size:12px;color:#222">Anuluj</div>
<div class="a" style="left:1px;top:387px;width:1px;height:202px;background:#d2cdc9"></div>
<div class="a" style="left:0px;top:0px;width:1px;height:671px;background:#2a80bc"></div>
<div class="a" style="left:1023px;top:0px;width:1px;height:671px;background:#00a5e3"></div>
<div class="a" style="left:0px;top:670px;width:1024px;height:1px;background:#00a5e3"></div>
</div></body></html>
